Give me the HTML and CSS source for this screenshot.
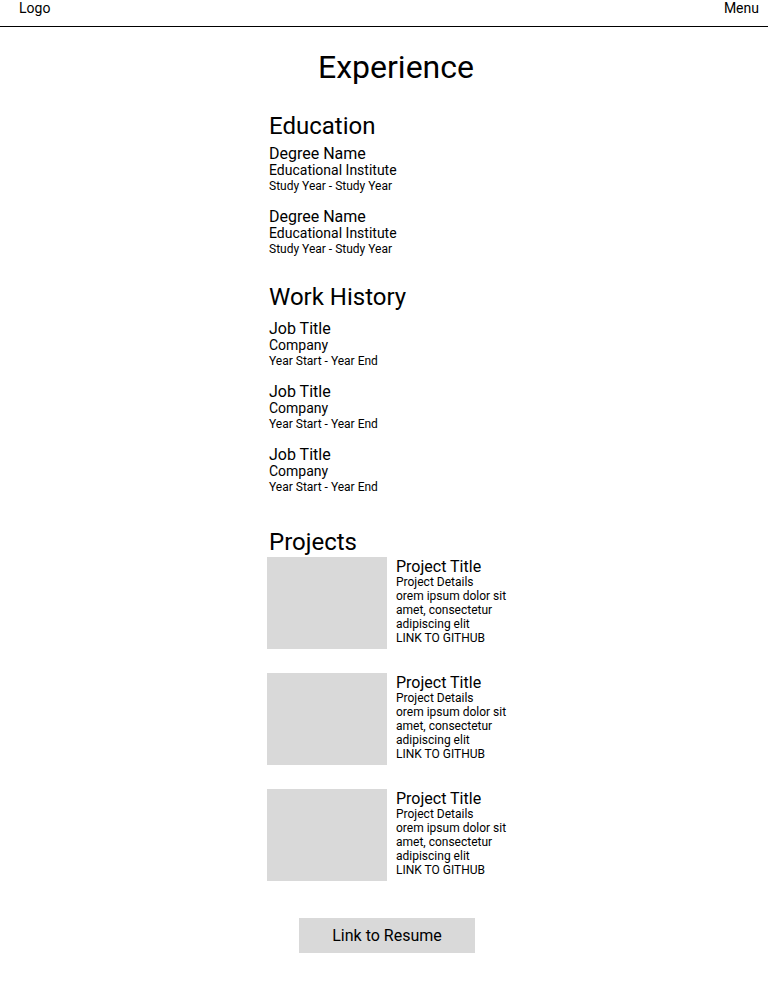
FILE: index.html
```html
<!DOCTYPE html>
<html lang="en">
<head>
<meta charset="utf-8">
<title>Experience</title>
<link rel="stylesheet" href="styles.css">
</head>
<body>
<header class="topbar">
  <span class="logo">Logo</span>
  <span class="menu">Menu</span>
</header>
<main class="content">
  <h1 class="page-title">Experience</h1>

  <section class="section section-edu">
    <h2 class="section-title">Education</h2>
    <div class="entries">
      <div class="entry">
        <div class="entry-title">Degree Name</div>
        <div class="entry-sub">Educational Institute</div>
        <div class="entry-date">Study Year - Study Year</div>
      </div>
      <div class="entry">
        <div class="entry-title">Degree Name</div>
        <div class="entry-sub">Educational Institute</div>
        <div class="entry-date">Study Year - Study Year</div>
      </div>
    </div>
  </section>

  <section class="section section-work">
    <h2 class="section-title">Work History</h2>
    <div class="entries entries-work">
      <div class="entry">
        <div class="entry-title">Job Title</div>
        <div class="entry-sub">Company</div>
        <div class="entry-date">Year Start - Year End</div>
      </div>
      <div class="entry">
        <div class="entry-title">Job Title</div>
        <div class="entry-sub">Company</div>
        <div class="entry-date">Year Start - Year End</div>
      </div>
      <div class="entry">
        <div class="entry-title">Job Title</div>
        <div class="entry-sub">Company</div>
        <div class="entry-date">Year Start - Year End</div>
      </div>
    </div>
  </section>

  <section class="section section-projects">
    <h2 class="section-title">Projects</h2>
    <div class="projects">
      <div class="project">
        <div class="project-thumb"></div>
        <div class="project-info">
          <div class="project-title">Project Title</div>
          <div class="project-line">Project Details</div>
          <div class="project-line">orem ipsum dolor sit</div>
          <div class="project-line">amet, consectetur</div>
          <div class="project-line">adipiscing elit</div>
          <div class="project-line">LINK TO GITHUB</div>
        </div>
      </div>
      <div class="project">
        <div class="project-thumb"></div>
        <div class="project-info">
          <div class="project-title">Project Title</div>
          <div class="project-line">Project Details</div>
          <div class="project-line">orem ipsum dolor sit</div>
          <div class="project-line">amet, consectetur</div>
          <div class="project-line">adipiscing elit</div>
          <div class="project-line">LINK TO GITHUB</div>
        </div>
      </div>
      <div class="project">
        <div class="project-thumb"></div>
        <div class="project-info">
          <div class="project-title">Project Title</div>
          <div class="project-line">Project Details</div>
          <div class="project-line">orem ipsum dolor sit</div>
          <div class="project-line">amet, consectetur</div>
          <div class="project-line">adipiscing elit</div>
          <div class="project-line">LINK TO GITHUB</div>
        </div>
      </div>
    </div>
  </section>

  <a class="resume-btn" href="#">Link to Resume</a>
</main>
</body>
</html>
```

FILE: styles.css
```css
* {
  box-sizing: border-box;
}

html, body {
  margin: 0;
  padding: 0;
  background: #ffffff;
}

body {
  font-family: Roboto, "Liberation Sans", Arial, sans-serif;
  color: #000000;
}

.topbar {
  display: flex;
  justify-content: space-between;
  align-items: flex-start;
  height: 27px;
  padding: 0 9px 0 19px;
  border-bottom: 1px solid #000000;
  font-size: 14px;
  line-height: 16px;
}

.content {
  width: 258px;
  margin-left: 267px;
  display: flex;
  flex-direction: column;
  align-items: stretch;
}

.page-title {
  margin: 21px 0 0;
  font-size: 32px;
  line-height: 38px;
  font-weight: 400;
  text-align: center;
}

.section-title {
  margin: 0;
  padding-left: 2px;
  font-size: 24px;
  line-height: 28px;
  font-weight: 400;
}

.section-edu {
  margin-top: 26px;
}

.section-work {
  margin-top: 26px;
}

.section-projects {
  margin-top: 33px;
}

.entries {
  display: flex;
  flex-direction: column;
  gap: 15px;
  padding-top: 6px;
  padding-left: 2px;
}

.entries-work {
  padding-top: 10px;
}

.entry {
  display: flex;
  flex-direction: column;
}

.entry-title {
  font-size: 16px;
  line-height: 16px;
}

.entry-sub {
  font-size: 14px;
  line-height: 16px;
}

.entry-date {
  font-size: 12px;
  line-height: 16px;
}

.projects {
  display: flex;
  flex-direction: column;
  gap: 24px;
  padding-top: 1px;
}

.project {
  display: flex;
  gap: 9px;
}

.project-thumb {
  width: 120px;
  height: 92px;
  background: #d9d9d9;
  flex: none;
}

.project-info {
  padding-top: 2px;
  display: flex;
  flex-direction: column;
}

.project-title {
  font-size: 16px;
  line-height: 16px;
}

.project-line {
  font-size: 12px;
  line-height: 14px;
}

.resume-btn {
  display: block;
  width: 176px;
  height: 35px;
  margin: 37px 0 0 32px;
  background: #d9d9d9;
  color: #000000;
  text-decoration: none;
  text-align: center;
  font-size: 16px;
  line-height: 35px;
}
```
